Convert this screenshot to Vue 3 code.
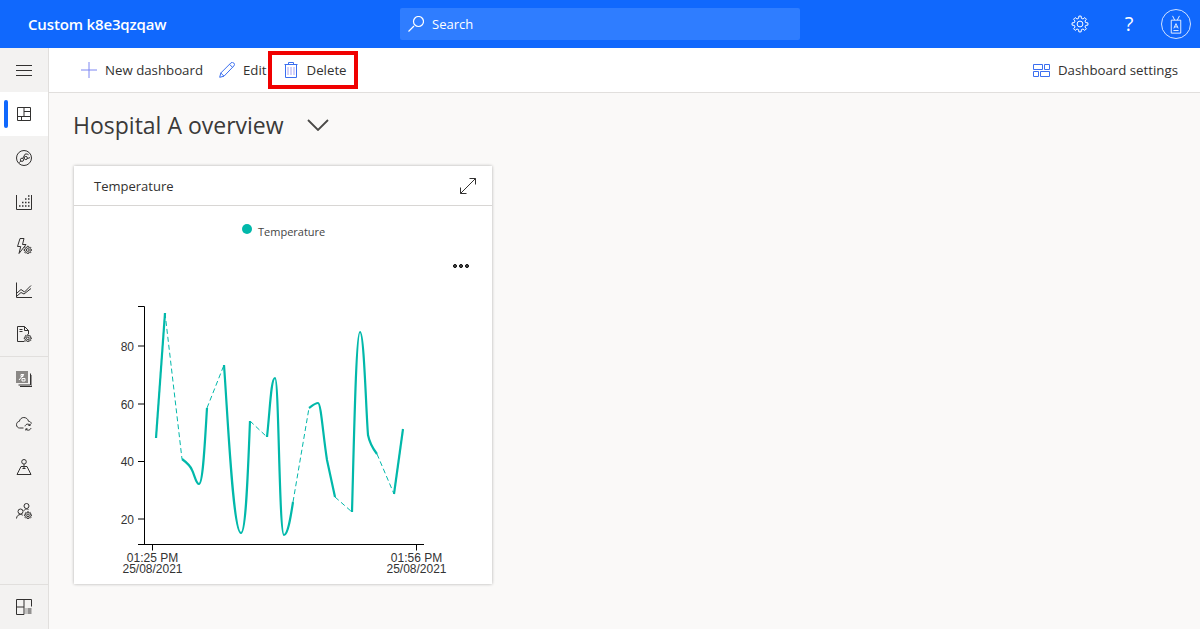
<script setup>
const circ = (x, y, r) => `M${x - r} ${y}a${r} ${r} 0 1 0 ${2 * r} 0a${r} ${r} 0 1 0 ${-2 * r} 0`
const gear = (cx, cy, ro, ri, n = 8) => {
  let d = ''
  for (let i = 0; i < n; i++) {
    const a = (i / n) * Math.PI * 2
    const s = Math.PI / n
    const pts = [[ri, a - s * 0.62], [ro, a - s * 0.36], [ro, a + s * 0.36], [ri, a + s * 0.62]]
    pts.forEach(([r, t], j) => {
      const p = `${(cx + r * Math.cos(t)).toFixed(2)} ${(cy + r * Math.sin(t)).toFixed(2)}`
      d += (i === 0 && j === 0 ? 'M' : 'L') + p
    })
  }
  return d + 'Z' + circ(cx, cy, ri * 0.5)
}

const topNav = [
  { d: 'M1.5 1.5h13v13h-13zM8 1.5v9M1.5 10.5h13M5.5 10.5v4M8 5.5h6.5', active: true },
  { d: circ(8, 8, 7.5) + circ(6, 9.8, 1.6) + circ(9.8, 8, 1.6) + 'M6.8 8.400L9 4.200c1.300-.5 2.800-.2 3.600.6M11.300 8.600l2.700-1M4.800 11L3 12.800' },
  { d: 'M.5 1v14.500h15V1', dots: 'M12 2h1.500M9 5h1.500M12 5h1.500M6 8.500h1.500M9 8.500h1.500M12 8.500h1.500M3 12h1.500M6 12h1.500M9 12h1.500M12 12h1.500' },
  { d: 'M8 .5H4L1.500 8.500h3.200L3 15.500l7-9H6.500zM' + gear(11.800, 12, 3.800, 2.800).slice(1) },
  { d: 'M.5 .5v15h15.500M1 11l4-3.500 3.500 2.500 6.500-6.500M1 14l4-3.500 3 1.500 7-5.500' },
  { d: 'M1.500 .5h7l4 4v3.500M1.500 .5v15h7M8.500 .5v4h4M3.500 3.500h3M3.500 5.500h3M' + gear(11.800, 12.300, 3.600, 2.600).slice(1) },
]
const midNav = [
  { d: 'M4 15.500h12V4M2.500 14h12V2.500', block: true },
  { d: 'M7.500 13H3.500C1.800 13 .5 11.500 .5 9.700S1.800 6.400 3.300 6.400C3.800 4.200 5.500 2.500 7.800 2.500c2.300 0 4.200 1.500 4.700 3.800 1.400.1 2.600.9 3 2.200M9 11.300c.3-1.400 1.500-2.200 2.800-2.200 1 0 1.800.5 2.200 1.100M14.200 8.700v1.800h-1.800M15 13c-.3 1.300-1.500 2.200-2.800 2.200-1 0-1.800-.5-2.200-1.100M9.800 15.500v-1.700h1.700' },
  { d: circ(8, 2.800, 2.300) + 'M8 5.100v4M5 7.500h6L15 15.500H1zM6.500 9.500h3' },
  { d: circ(10.500, 3, 2.500) + circ(4.500, 8.500, 2.500) + 'M.5 15.500c.2-2.500 1.800-4 4-4 .9 0 1.700.2 2.300.7M7.800 8c.3-1 1.300-2 2.700-2 .7 0 1.400.2 2 .6M' + gear(12, 12.300, 3.600, 2.600).slice(1) },
]

const solid = [
  'M156 438L165 313',
  'M182 459C186 462 190 465 192 470C195 476 196 484 199 484C203 484 205 440 207 408',
  'M224 365C228 420 233 533 241 533C246 533 248 470 250 421',
  'M267 437C270 410 271 378 275 378C279 378 279 535 284 535C288 535 291 515 293 502',
  'M309 408C312 406 315 403 318 403C321 403 323 435 327 460L335 497',
  'M352 512C354 440 356 332 360 332C364 332 366 410 368 435C370 445 374 450 377 454',
  'M394 494L403 429',
]
const dashed = [
  'M165 313L182 459',
  'M207 408L224 365',
  'M250 421L267 437',
  'M293 502L309 408',
  'M335 497L352 512',
  'M377 454L394 494',
]
const yTicks = [
  { label: '80', y: 346 },
  { label: '60', y: 404 },
  { label: '40', y: 461.500 },
  { label: '20', y: 519 },
]
const settingsGear = gear(16, 16, 8, 5.800)
</script>

<template>
  <div class="page">
    <header class="topbar">
      <div class="brand">Custom k8e3qzqaw</div>
      <div class="search">
        <svg class="search-icon" width="16" height="16" viewBox="0 0 16 16"><path d="M.5 15.500L6 10M10.500 .5a5 5 0 1 0 0 10a5 5 0 1 0 0-10" /></svg>
        <span>Search</span>
      </div>
      <div class="top-actions">
        <svg width="32" height="32" viewBox="0 0 32 32" class="top-icon"><path :d="settingsGear" /></svg>
        <span class="help">?</span>
        <div class="avatar">
          <svg width="18" height="22" viewBox="0 0 18 22" class="top-icon"><path d="M5 1l2.500 5M13 1l-2.500 5M3.500 6h11v15h-11zM6.500 15.500L9 10l2.500 5.500M7.300 13.800h3.400M6 18h6" /></svg>
        </div>
      </div>
    </header>

    <div class="body">
      <nav class="sidebar">
        <button class="nav-item burger">
          <svg width="16" height="16" viewBox="0 0 16 16"><path d="M0 3.500h16M0 8.500h16M0 13.500h16" /></svg>
        </button>
        <button v-for="(it, i) in topNav" :key="'t' + i" class="nav-item" :class="{ active: it.active }">
          <svg width="16" height="16" viewBox="0 0 16 16">
            <path :d="it.d" />
            <path v-if="it.dots" :d="it.dots" class="dots" />
          </svg>
        </button>
        <div class="nav-sep"></div>
        <button v-for="(it, i) in midNav" :key="'m' + i" class="nav-item">
          <svg width="16" height="16" viewBox="0 0 16 16">
            <rect v-if="it.block" x="0" y="0" width="12" height="12" fill="#8a8886" stroke="none" />
            <path :d="it.d" />
            <path v-if="it.block" d="M3 9l5-6M5 3.500h2v2h-2zM6 7.500h3v2.500h-3z" class="on-block" />
          </svg>
        </button>
        <div class="nav-spacer"></div>
        <button class="nav-item bottom">
          <svg width="16" height="16" viewBox="0 0 16 16">
            <path d="M.5 8V.5h15v7M8 .5v15M.5 8h7.500M.5 8v7.500h7.500M9.500 10h1M11.500 10h4M9.500 12h1M11.500 12h4M9.500 14h1M11.500 14h4" />
          </svg>
        </button>
      </nav>

      <div class="main">
        <div class="commands">
          <button class="cmd">
            <svg class="cmd-icon plus" width="16" height="16" viewBox="0 0 16 16"><path d="M8 0v16M0 8h16" /></svg>
            <span>New dashboard</span>
          </button>
          <button class="cmd">
            <svg class="cmd-icon" width="16" height="16" viewBox="0 0 16 16"><path d="M.7 15.300l1.100-4.300L11.800 1a1.900 1.900 0 0 1 3 3L5 14.200zM10.500 2.300l3 3M1.800 11l3.200 3.200" /></svg>
            <span>Edit</span>
          </button>
          <button class="cmd delete">
            <svg class="cmd-icon" width="16" height="16" viewBox="0 0 16 16">
              <path d="M1.500 2.500h13M5.500 2.500V.5h5v2M2.500 2.500v13h11v-13" />
              <path d="M5 5v8M8 5v8M11 5v8" class="strip" />
            </svg>
            <span>Delete</span>
            <span class="highlight"></span>
          </button>
          <button class="cmd settings">
            <svg class="cmd-icon" width="17" height="13" viewBox="0 0 17 13"><path d="M.5 .5h9v5h-9zM11.500 .5h5v5h-5zM.5 7.500h5v5h-5zM7.500 7.500h9v5h-9z" /></svg>
            <span>Dashboard settings</span>
          </button>
        </div>

        <div class="content">
          <div class="title-row">
            <h1>Hospital A overview</h1>
            <svg width="22" height="12" viewBox="0 0 22 12"><path d="M1 1L11 11L21 1" /></svg>
          </div>

          <section class="card">
            <div class="card-head">
              <span>Temperature</span>
              <svg width="16" height="16" viewBox="0 0 16 16"><path d="M.5 15.500L15.500 .5M9.500 .5h6v6M.5 9.500v6h6" /></svg>
            </div>
            <div class="legend">
              <i></i>
              <span>Temperature</span>
            </div>
            <button class="more" aria-label="More">
              <i></i><i></i><i></i>
            </button>
            <svg class="chart" width="418" height="378" viewBox="74 206 418 378">
              <path class="axis" d="M138 306.500h6.500V544.500M138 544.500H424M152.500 544.500v6M416.500 544.500v6" />
              <g v-for="t in yTicks" :key="t.label">
                <path class="axis" :d="`M138 ${t.y}h6`" />
                <text x="134" :y="t.y + 4.500" text-anchor="end">{{ t.label }}</text>
              </g>
              <path v-for="d in dashed" :key="d" class="dash" :d="d" />
              <path v-for="d in solid" :key="d" class="line" :d="d" />
              <text x="152.500" y="562" text-anchor="middle">01:25 PM</text>
              <text x="152.500" y="573" text-anchor="middle">25/08/2021</text>
              <text x="416.500" y="562" text-anchor="middle">01:56 PM</text>
              <text x="416.500" y="573" text-anchor="middle">25/08/2021</text>
            </svg>
          </section>
        </div>
      </div>
    </div>
  </div>
</template>

<style>
html, body { margin: 0; }
</style>

<style scoped>
.page {
  width: 1200px;
  height: 629px;
  overflow: hidden;
  display: flex;
  flex-direction: column;
  font-family: "Open Sans", "Noto Sans", sans-serif;
  color: #323130;
}
svg path { fill: none; stroke: #323130; stroke-width: 1; }
button { border: 0; background: none; padding: 0; font: inherit; color: inherit; }

.topbar {
  height: 48px;
  flex: none;
  background: #1068fd;
  color: #fff;
  display: flex;
  align-items: center;
}
.brand {
  flex: 0 0 400px;
  box-sizing: border-box;
  padding-left: 28px;
  font-size: 15px;
  font-weight: 600;
  letter-spacing: -0.15px;
  white-space: nowrap;
}
.search {
  width: 400px;
  height: 32px;
  box-sizing: border-box;
  padding-left: 8px;
  background: #2f7dff;
  border-radius: 2px;
  display: flex;
  align-items: center;
  gap: 8px;
  font-size: 13px;
}
.search-icon path { stroke: #fff; stroke-width: 1.200; }
.top-actions {
  margin-left: auto;
  display: flex;
  align-items: center;
  padding-right: 8px;
}
.top-icon path { stroke: #fff; }
.top-actions > svg { margin-right: 17px; }
.help {
  width: 32px;
  text-align: center;
  font-size: 20px;
  line-height: 24px;
  font-weight: 400;
  margin-right: 16px;
}
.avatar {
  width: 30px;
  height: 30px;
  box-sizing: border-box;
  border: 1px solid rgba(255, 255, 255, .8);
  border-radius: 50%;
  display: flex;
  align-items: center;
  justify-content: center;
  margin-right: 1px;
}
.avatar svg { width: 16px; height: 19px; }

.body { flex: 1; display: flex; min-height: 0; }
.sidebar {
  width: 49px;
  flex: none;
  box-sizing: border-box;
  background: #f3f2f1;
  border-right: 1px solid #e1dfdd;
  display: flex;
  flex-direction: column;
}
.nav-item {
  height: 44px;
  width: 48px;
  flex: none;
  display: flex;
  align-items: center;
  justify-content: center;
  position: relative;
}
.nav-item svg path.dots { stroke-width: 1.500; }
.nav-item svg path.on-block { stroke: #fff; }
.nav-item.active { background: #fff; }
.nav-item.active::before {
  content: "";
  position: absolute;
  left: 4px;
  top: 8px;
  bottom: 8px;
  width: 4px;
  border-radius: 2px;
  background: #1068fd;
}
.nav-sep { height: 1px; background: #e1dfdd; flex: none; }
.nav-spacer { flex: 1; }
.nav-item.bottom { border-top: 1px solid #e1dfdd; height: 45px; }

.main { flex: 1; min-width: 0; display: flex; flex-direction: column; background: #faf9f8; }
.commands {
  height: 45px;
  flex: none;
  box-sizing: border-box;
  background: #fff;
  border-bottom: 1px solid #e1dfdd;
  padding-left: 32px;
  display: flex;
  align-items: center;
  font-size: 13.250px;
}
.cmd {
  display: flex;
  align-items: center;
  gap: 8px;
  height: 36px;
  position: relative;
  margin-right: 16px;
  white-space: nowrap;
}
.cmd-icon path { stroke: #3b6ff0; }
.cmd-icon.plus path { stroke: #7c86f2; }
.cmd-icon path.strip { stroke: #a9a4f2; }
.cmd.settings { margin-left: auto; margin-right: 22px; }
.highlight {
  position: absolute;
  left: -15px;
  top: -1px;
  width: 90px;
  height: 38px;
  box-sizing: border-box;
  border: 4px solid #f00000;
  pointer-events: none;
}

.content { flex: 1; padding: 0 25px; min-height: 0; }
.title-row {
  height: 64px;
  margin-bottom: 9px;
  display: flex;
  align-items: center;
  gap: 23px;
}
.title-row h1 {
  margin: 0 0 0 -1px;
  font-size: 23px;
  font-weight: 400;
  color: #3b3a39;
  white-space: nowrap;
}
.title-row svg path { stroke: #4a4947; stroke-width: 1.800; }
.card {
  width: 418px;
  height: 418px;
  background: #fff;
  position: relative;
  box-shadow: 0 0 3px rgba(0, 0, 0, .3);
}
.card-head {
  height: 40px;
  box-sizing: border-box;
  border-bottom: 1px solid #d8d6d4;
  padding: 0 16px 0 20px;
  display: flex;
  align-items: center;
  justify-content: space-between;
  font-size: 13px;
  font-weight: 500;
}
.legend {
  position: absolute;
  left: 168px;
  top: 57px;
  display: flex;
  align-items: center;
  gap: 6px;
  font-size: 11px;
  line-height: 18px;
  color: #444;
  z-index: 1;
}
.legend i {
  width: 10px;
  height: 10px;
  border-radius: 50%;
  background: #01b8aa;
  margin-top: -6px;
}
.more {
  position: absolute;
  left: 379px;
  top: 98px;
  display: flex;
  gap: 2px;
  z-index: 1;
}
.more i {
  width: 2px;
  height: 2px;
  border: 1px solid #000;
  background: #555;
  border-radius: 50%;
}
.chart { display: block; }
.chart path.axis { stroke: #000; stroke-width: 1; }
.chart path.line { stroke: #01b8aa; stroke-width: 2.200; }
.chart path.dash { stroke: #01b8aa; stroke-width: 1; stroke-dasharray: 5 3; }
.chart text {
  font-family: "Liberation Sans", Arial, sans-serif;
  font-size: 12px;
  fill: #333;
}
</style>
